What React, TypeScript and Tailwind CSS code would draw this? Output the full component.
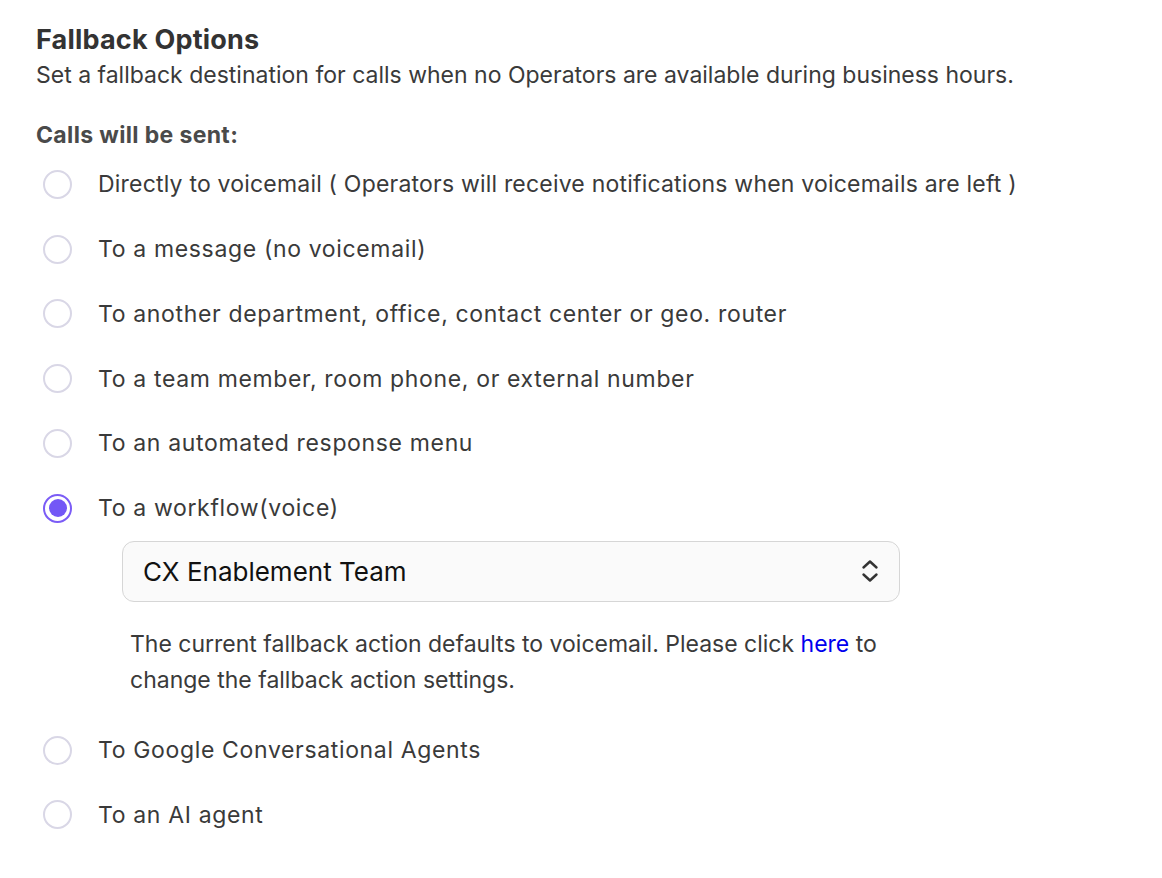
import React from "react";

const options = [
  "Directly to voicemail ( Operators will receive notifications when voicemails are left )",
  "To a message (no voicemail)",
  "To another department, office, contact center or geo. router",
  "To a team member, room phone, or external number",
  "To an automated response menu",
];

function Radio({ checked }: { checked?: boolean }) {
  if (checked) {
    return (
      <span className="flex h-[29px] w-[29px] shrink-0 items-center justify-center rounded-full border-2 border-[#7b5cf6] bg-white">
        <span className="h-[18px] w-[18px] rounded-full bg-[#7357f6]" />
      </span>
    );
  }
  return <span className="h-[29px] w-[29px] shrink-0 rounded-full border-2 border-[#d9d7e6] bg-white" />;
}

function Row({ label, checked, tight }: { label: string; checked?: boolean; tight?: boolean }) {
  return (
    <div className="flex h-[64.8px] items-center pl-[7px]">
      <Radio checked={checked} />
      <span
        className={
          tight
            ? "ml-[26px] text-[23px] tracking-[0.2px] text-[#3a3a3a]"
            : "ml-[26px] text-[23px] tracking-[0.65px] text-[#3a3a3a]"
        }
      >
        {label}
      </span>
    </div>
  );
}

export default function App() {
  return (
    <div
      className="min-h-[878px] w-[1162px] bg-white pl-[36px] pt-[24px]"
      style={{ fontFamily: "Inter, 'Noto Sans', sans-serif" }}
    >
      <h1 className="h-[32px] text-[27px] font-bold leading-[32px] tracking-[0.2px] text-[#333333]">Fallback Options</h1>
      <p className="mt-[3px] h-[32px] text-[23px] leading-[32px] text-[#3a3a3a]">
        Set a fallback destination for calls when no Operators are available during business hours.
      </p>
      <p className="mt-[30px] h-[28px] text-[23px] font-bold leading-[28px] tracking-[0.35px] text-[#4a4a4a]">Calls will be sent:</p>
      <div className="mt-[3px] flex flex-col">
        {options.map((o, i) => (
          <Row key={o} label={o} tight={i === 0} />
        ))}
        <Row label="To a workflow(voice)" checked />
        <div className="ml-[86px] w-[778px]">
          <div className="flex h-[61px] items-center justify-between rounded-[12px] border border-[#d6d6d6] bg-[#fafafa] pl-[20px] pr-[20px]">
            <span className="text-[26px] text-[#111111]">CX Enablement Team</span>
            <svg width="18" height="26" viewBox="0 0 18 26" fill="none" stroke="#333" strokeWidth="2.4" strokeLinecap="round" strokeLinejoin="round">
              <path d="M2.5 9.5 L9 3.5 L15.5 9.5" />
              <path d="M2.5 16.5 L9 22.5 L15.5 16.5" />
            </svg>
          </div>
          <p className="mt-[24px] px-[8px] text-[23px] leading-[36px] text-[#3a3a3a]">
            The current fallback action defaults to voicemail. Please click{" "}
            <a className="text-[#0000ee]">here</a> to change the fallback action settings.
          </p>
        </div>
        <div className="mt-[20px]">
          <Row label="To Google Conversational Agents" />
          <Row label="To an AI agent" />
        </div>
      </div>
    </div>
  );
}
